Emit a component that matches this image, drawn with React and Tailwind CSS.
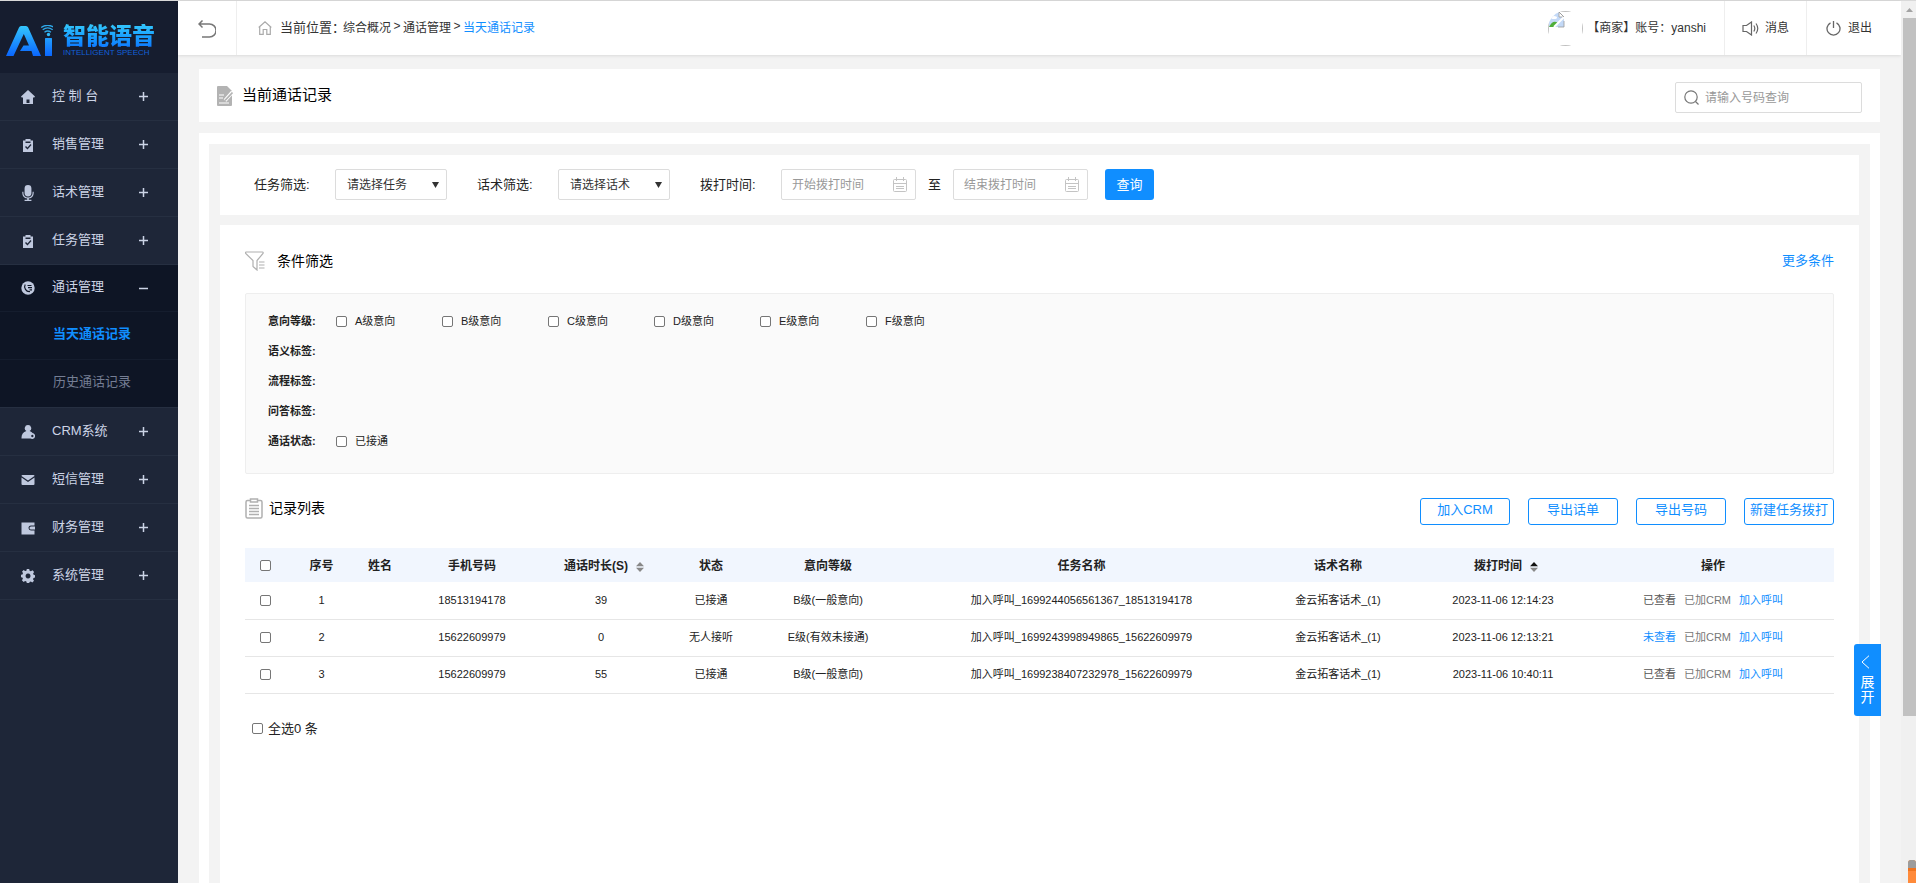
import { useState } from "react";

const FONT = "font-['Liberation_Sans','Noto_Sans_CJK_SC',sans-serif]";

function Logo() {
  return (
    <div className="flex items-center gap-[10px]">
      <svg viewBox="0 0 47 31" className="h-[31px] w-[47px] shrink-0" aria-hidden="true">
        <defs>
          <linearGradient id="logo" x1="0" y1="0" x2="0" y2="31" gradientUnits="userSpaceOnUse">
            <stop offset="0" stopColor="#35c8fb" />
            <stop offset="1" stopColor="#0a66ff" />
          </linearGradient>
        </defs>
        <path
          fill="url(#logo)"
          d="M15 1h5q1.500 0 2.200 1.500L35 31h-8l-1.500-5H14l3.500-5.500h5.500L17.800 9 7.500 31H0L13 2.500Q13.600 1 15 1z"
        />
        <rect x="39" y="13" width="7" height="18" rx=".5" fill="url(#logo)" />
        <circle cx="42.500" cy="9.500" r="1.700" fill="#2fbaf9" />
        <path
          d="M39.300 7.300q3.200-2.600 6.400 0M37.500 4.800q5-4 10 0M36 2.500q6.500-4.500 13 0"
          transform="translate(-.8 0)"
          fill="none"
          stroke="#2fa8e8"
          strokeWidth="1.300"
        />
      </svg>
      <div className="flex flex-col">
        <span className="bg-linear-to-b from-[#35c8fb] to-[#1277ff] bg-clip-text text-[23px] leading-[24px] font-black whitespace-nowrap text-transparent">
          智能语音
        </span>
        <span className="mt-px text-[8px] leading-[8px] whitespace-nowrap text-[#1260d8]">INTELLIGENT SPEECH</span>
      </div>
    </div>
  );
}

function MenuIcon({ name }) {
  const glyphs = {
    home: (
      <path fillRule="evenodd" d="M7 0l7 6.500-.7 1H12V14H2V7.500H.7L0 6.500zM5.500 9.500v3.500h3V9.500z" />
    ),
    clip: (
      <path fillRule="evenodd" d="M2 2.500h2.500V1h5v1.500H12V14H2zM4.500 3.500V5h5V3.500zM4 9l2.500 2.500L10.500 7l-1-.9L6.500 9.600 5 8z" />
    ),
    mic: (
      <path d="M4 3a3 3 0 0 1 6 0v4a3 3 0 0 1-6 0zM2 6h1v1a4 4 0 0 0 8 0V6h1v1a5 5 0 0 1-4.300 4.900V13H10v1H4v-1h2.300v-1.100A5 5 0 0 1 2 7z" />
    ),
    call: (
      <>
        <circle cx="7" cy="7" r="6.700" />
        <path d="M4.200 3.500C2.500 6.500 5 11 9 10.500M6.500 4.500h4M7 6.700h4M8.500 8.800H11" fill="none" stroke="#0e1525" strokeWidth="1.200" />
      </>
    ),
    user: (
      <path fillRule="evenodd" d="M7 0a3.200 3.200 0 0 1 1.600 6C10 6.500 11 7.200 11.500 8A3 3 0 1 1 9.500 13.500H.5C.3 9.500 2 7 5.400 6A3.200 3.200 0 0 1 7 0zM11.300 9.800a1.200 1.200 0 1 0 .1 0z" />
    ),
    mail: <path d="M.5 3a1 1 0 0 1 1-1h11a1 1 0 0 1 1 1L7 7.500zM.5 4.500L7 9l6.500-4.500V11a1 1 0 0 1-1 1h-11a1 1 0 0 1-1-1z" />,
    wallet: (
      <path fillRule="evenodd" d="M.5 1.500h13V4.500H10a2.500 2.500 0 0 0 0 5h3.500v4H.5zM10 5.500h4v3h-4a1.500 1.500 0 0 1 0-3z" />
    ),
    gear: (
      <path fillRule="evenodd" d="M5.800 0h2.400l.4 1.800 1.300.5 1.600-1 1.600 1.700-1 1.500.5 1.300 1.400.4v2.300l-1.500.4-.5 1.300 1 1.500-1.700 1.700-1.500-1-1.200.5L8.200 14H5.800l-.4-1.600-1.300-.5-1.500 1-1.700-1.700 1-1.500-.5-1.300L0 8.200V5.800l1.500-.4L2 4.100 1 2.700l1.600-1.600 1.500 1 1.300-.4zM7 4.500a2.500 2.500 0 1 0 .1 0z" />
    ),
  };
  return (
    <svg
      viewBox="0 0 14 14"
      className={(name === "mic" ? "-mx-px size-4" : "size-[14px]") + " text-[#bfc8de]"}
      fill="currentColor"
      aria-hidden="true"
    >
      {glyphs[name]}
    </svg>
  );
}

const MENU = [
  { icon: "home", label: "控 制 台" },
  { icon: "clip", label: "销售管理" },
  { icon: "mic", label: "话术管理" },
  { icon: "clip", label: "任务管理" },
  { icon: "call", label: "通话管理", open: true },
  { icon: "user", label: "CRM系统" },
  { icon: "mail", label: "短信管理" },
  { icon: "wallet", label: "财务管理" },
  { icon: "gear", label: "系统管理" },
];

function Sidebar() {
  return (
    <aside className="w-[178px] shrink-0 bg-[#1e2638] text-[13px] text-[#ccd4e6]">
      <div className="flex h-[72px] items-center bg-[#161d2f] pt-1.5 pl-1.5">
        <Logo />
      </div>
      <nav>
        {MENU.map((m) => (
          <div key={m.label} className={m.open ? "bg-[#0e1525]" : ""}>
            <button
              type="button"
              aria-expanded={!!m.open}
              className={
                "flex w-full items-center border-b pl-[21px] pr-[30px] " +
                (m.open ? "h-[47px] border-[#151d2e]" : "h-12 border-[#262f41]")
              }
            >
              <MenuIcon name={m.icon} />
              <span className="ml-[17px] grow pb-0.5 text-left">{m.label}</span>
              <svg viewBox="0 0 9 9" className="size-[9px]" stroke="currentColor" strokeWidth="1.500" aria-hidden="true">
                <path d={m.open ? "M0 4.500h9" : "M0 4.500h9M4.500 0v9"} />
              </svg>
            </button>
            {m.open && (
              <>
                <a href="#today" className="flex h-12 items-center border-b border-[#151d2e] pb-1 pl-[53px] font-bold text-[#108eff]">
                  当天通话记录
                </a>
                <a href="#history" className="flex h-12 items-center border-b border-[#262f41] pb-1 pl-[53px] text-[#757e94]">
                  历史通话记录
                </a>
              </>
            )}
          </div>
        ))}
      </nav>
    </aside>
  );
}

function Header() {
  return (
    <header className="flex h-[54px] items-stretch bg-white text-xs text-[#333] shadow-[0_1px_3px_rgba(0,0,0,0.1)]">
      <button type="button" aria-label="返回" className="flex w-[59px] items-center justify-center border-r border-[#eee] pt-0.5">
        <svg viewBox="0 0 18 18" className="size-[18px]" fill="none" stroke="#777" strokeWidth="1.500">
          <path d="M4.500 0.500L1 4l3.500 3.500M1 4h10.500a6.500 6.500 0 0 1 0 13H4" />
        </svg>
      </button>
      <div className="flex grow items-center pl-[21px]">
        <svg viewBox="0 0 14 14" className="mr-2 size-[14px]" fill="none" stroke="#aaa" strokeWidth="1.200" aria-hidden="true">
          <path d="M.7 6.500L7 .8l6.300 5.700M1.700 5.700v7.700h3.500V8.500h3.600v4.900h3.500V5.700" />
        </svg>
        <span className="w-[63px] text-[13px] whitespace-nowrap">当前位置：</span>
        <a href="#overview">综合概况</a>
        <span className="w-3 pb-1 text-center">&gt;</span>
        <a href="#calls">通话管理</a>
        <span className="w-3 pb-1 text-center">&gt;</span>
        <a href="#today" className="text-[#108eff]">当天通话记录</a>
      </div>
      <div className="flex items-center pr-[18px]">
        <div className="mr-1 size-[35px] overflow-hidden rounded-full">
          <div className="size-full border border-[#c0c0c0]">
            <svg viewBox="0 0 16 16" className="size-4" aria-hidden="true">
              <path d="M0 0h10l5 5v10H0z" fill="#c3d9f7" />
              <path d="M10 0v5h5z" fill="#fff" stroke="#999" strokeWidth=".8" />
              <ellipse cx="5" cy="5.500" rx="3" ry="1.600" fill="#fff" />
              <path d="M0 15q4-8 9-4l-3 4z" fill="#4fae3a" />
              <path d="M15 5L5 15" stroke="#fff" strokeWidth="2" />
              <path d="M10 0l5 5M15 9v6H9" fill="none" stroke="#999" strokeWidth=".8" />
            </svg>
          </div>
        </div>
        <span>【商家】账号：yanshi</span>
      </div>
      <button type="button" className="flex w-[82px] items-center justify-center gap-1.5 border-l border-[#eee]">
        <svg viewBox="0 0 17 15" className="h-[15px] w-[17px]" fill="none" stroke="#666" strokeWidth="1.200" aria-hidden="true">
          <path d="M1 4.500h3.500L9.500 1v13L4.500 10.500H1zM11.800 4.500q2 3 0 6M14 2.500q3.500 5 0 10" />
        </svg>
        消息
      </button>
      <button type="button" className="flex w-[95px] items-center gap-[7px] border-l border-[#eee] pl-[19px]">
        <svg viewBox="0 0 15 15" className="size-[15px]" fill="none" stroke="#666" strokeWidth="1.300" aria-hidden="true">
          <path d="M4.500 1.800a6.500 6.500 0 1 0 6 0M7.500 0v7" />
        </svg>
        退出
      </button>
    </header>
  );
}

function CalendarIcon() {
  return (
    <svg viewBox="0 0 14 15" className="h-[15px] w-[14px] shrink-0" fill="none" stroke="#c4c4c4" aria-hidden="true">
      <rect x=".5" y="2.500" width="13" height="12" rx="1" />
      <path d="M1 6.500h12M3.500 0v4M10.500 0v4M3 9.500h8M3 11.500h8" />
    </svg>
  );
}

function DateField({ id, label }) {
  return (
    <div className="flex h-[31px] w-[135px] items-center rounded-[2px] border border-[#dcdcdc] pl-2.5 pr-2">
      <input id={id} aria-label={label} placeholder={label} className="w-0 grow text-xs outline-none placeholder:text-[#999]" />
      <CalendarIcon />
    </div>
  );
}

function SelectField({ id, text }) {
  return (
    <div className="relative w-[112px]">
      <select id={id} className="h-[31px] w-full appearance-none rounded-[2px] border border-[#dcdcdc] bg-white pl-[11px] text-xs text-[#333]">
        <option>{text}</option>
      </select>
      <svg viewBox="0 0 7 6" className="pointer-events-none absolute right-2 top-[13px] h-1.5 w-[7px]" fill="#333" aria-hidden="true">
        <path d="M0 0h7L3.500 6z" />
      </svg>
    </div>
  );
}

function Check({ className = "", ...rest }) {
  return (
    <input
      type="checkbox"
      className={"size-[11px] shrink-0 appearance-none rounded-[2px] border border-[#767676] bg-white checked:bg-[#108eff] " + className}
      {...rest}
    />
  );
}

function FilterRow({ title, options = [] }) {
  return (
    <div className="flex h-[30px] items-center">
      <span className="w-[68px] font-bold">{title}:</span>
      {options.map((o) => (
        <label key={o} className="flex w-[106px] items-center gap-2">
          <Check />
          {o}
        </label>
      ))}
    </div>
  );
}

function Sort({ up = "#888", down = "#888" }) {
  return (
    <svg viewBox="0 0 8 10" className="ml-2 inline-block h-2.5 w-2" aria-hidden="true">
      <path d="M0 4.200L4 0l4 4.200z" fill={up} />
      <path d="M0 5.800L4 10l4-4.200z" fill={down} />
    </svg>
  );
}

const ROWS = [
  ["1", "", "18513194178", "39", "已接通", "B级(一般意向)", "加入呼叫_1699244056561367_18513194178", "金云拓客话术_(1)", "2023-11-06 12:14:23", "已查看"],
  ["2", "", "15622609979", "0", "无人接听", "E级(有效未接通)", "加入呼叫_1699243998949865_15622609979", "金云拓客话术_(1)", "2023-11-06 12:13:21", "未查看"],
  ["3", "", "15622609979", "55", "已接通", "B级(一般意向)", "加入呼叫_1699238407232978_15622609979", "金云拓客话术_(1)", "2023-11-06 10:40:11", "已查看"],
];

function Records() {
  const [picked, setPicked] = useState([]);
  const all = picked.length === ROWS.length;
  const toggleAll = () => setPicked(all ? [] : ROWS.map((r) => r[0]));
  const toggle = (id) => setPicked(picked.includes(id) ? picked.filter((p) => p !== id) : [...picked, id]);
  return (
    <>
      <table className="mt-[23px] w-full table-fixed text-center text-[11px] text-[#222]">
        <colgroup>
          <col className="w-[41px]" />
          <col className="w-[71px]" />
          <col className="w-[46px]" />
          <col className="w-[138px]" />
          <col className="w-[120px]" />
          <col className="w-[100px]" />
          <col className="w-[134px]" />
          <col className="w-[373px]" />
          <col className="w-[140px]" />
          <col className="w-[190px]" />
          <col className="w-[236px]" />
        </colgroup>
        <thead className="bg-[#f1f6fe] text-xs">
          <tr className="h-[34px]">
            <th><Check className="mx-auto block" aria-label="全选" checked={all} onChange={toggleAll} /></th>
            <th className="pt-0.5">序号</th>
            <th className="pt-0.5">姓名</th>
            <th className="pt-0.5">手机号码</th>
            <th className="pt-0.5 pl-1.5">通话时长(S)<Sort /></th>
            <th className="pt-0.5">状态</th>
            <th className="pt-0.5">意向等级</th>
            <th className="pt-0.5">任务名称</th>
            <th className="pt-0.5">话术名称</th>
            <th className="pt-0.5 pl-1.5">拨打时间<Sort up="#111" /></th>
            <th className="pt-0.5 pr-1.5">操作</th>
          </tr>
        </thead>
        <tbody>
          {ROWS.map((r) => (
            <tr key={r[0]} className="h-[37px] border-b border-[#e6e6e6]">
              <td>
                <Check className="mx-auto block" aria-label={"选择 " + r[0]} checked={picked.includes(r[0])} onChange={() => toggle(r[0])} />
              </td>
              {r.slice(0, 9).map((c, i) => (
                <td key={i}>{c}</td>
              ))}
              <td className="pr-1.5">
                <div className="flex justify-center gap-2">
                  <a href="#view" className={r[9] === "未查看" ? "text-[#108eff]" : "text-[#555]"}>{r[9]}</a>
                  <span className="text-[#777]">已加CRM</span>
                  <a href="#call" className="text-[#108eff]">加入呼叫</a>
                </div>
              </td>
            </tr>
          ))}
        </tbody>
      </table>
      <label className="mt-[25px] flex items-center gap-[5px] pl-[7px] text-[13px] text-[#222]">
        <Check checked={all} onChange={toggleAll} />
        全选{picked.length} 条
      </label>
    </>
  );
}

function Content() {
  return (
    <section className="flex grow flex-col bg-white px-[25px] pt-[22px]">
      <div className="flex h-7 items-center">
        <svg viewBox="0 0 20 20" className="size-5" fill="none" stroke="#b0b0b0" strokeWidth="1.200" aria-hidden="true">
          <path d="M1 1h16.500q1 0 .5 1.500L12 9.500V19l-4-3.500v-6L.7 2.500Q.3 1 1 1z" />
          <path d="M14 11h5.500M14 14h5.500M14 17h5.500" />
        </svg>
        <h2 className="ml-3 grow text-sm text-black">条件筛选</h2>
        <a href="#more" className="text-[13px] text-[#108eff]">更多条件</a>
      </div>
      <div className="mt-[18px] h-[181px] rounded-[2px] border border-[#eee] bg-[#fafafa] px-[22px] pt-3 text-[11px] text-[#222]">
        <FilterRow title="意向等级" options={["A级意向", "B级意向", "C级意向", "D级意向", "E级意向", "F级意向"]} />
        <FilterRow title="语义标签" />
        <FilterRow title="流程标签" />
        <FilterRow title="问答标签" />
        <FilterRow title="通话状态" options={["已接通"]} />
      </div>
      <div className="mt-6 flex items-start">
        <svg viewBox="0 0 18 21" className="h-[21px] w-[18px]" fill="none" stroke="#b0b0b0" strokeWidth="1.500" aria-hidden="true">
          <path d="M5 2.500H2.500A1.500 1.500 0 0 0 1 4v14.500A1.500 1.500 0 0 0 2.500 20h13a1.500 1.500 0 0 0 1.500-1.500V4a1.500 1.500 0 0 0-1.500-1.500H13" />
          <path d="M5.500 1h7v3h-7zM4 7.500h10M4 10.500h10M4 13.500h10M4 16.500h10" />
        </svg>
        <h2 className="ml-1.5 grow text-sm text-black">记录列表</h2>
        <div className="flex gap-[18px] text-[13px] text-[#108eff]">
          {["加入CRM", "导出话单", "导出号码", "新建任务拨打"].map((b) => (
            <button key={b} type="button" className="h-[27px] w-[90px] rounded-[3px] border border-[#108eff] pb-1 whitespace-nowrap">
              {b}
            </button>
          ))}
        </div>
      </div>
      <Records />
    </section>
  );
}

export default function App() {
  return (
    <div className={"relative flex min-h-screen flex-col overflow-hidden bg-[#f3f3f3] " + FONT}>
      <div className="h-px bg-[#d9d9d9]" />
      <div className="flex grow">
        <Sidebar />
        <div className="flex min-w-0 grow flex-col">
          <Header />
          <main className="relative mx-[21px] mt-3.5 flex grow flex-col">
            <section className="flex h-[53px] items-center bg-white px-[18px] pt-1">
              <svg viewBox="0 0 17 20" className="-mt-1 h-5 w-[17px]" aria-hidden="true">
                <path d="M1 0h9l5 5v14a1 1 0 0 1-1 1H1a1 1 0 0 1-1-1V1a1 1 0 0 1 1-1z" fill="#b3b3b3" />
                <path d="M2 9h5M2 12h4M2 17h10" stroke="#fff" />
                <path d="M8 14.500L15.500 6" stroke="#fff" strokeWidth="3.500" />
                <path d="M8 14.500L15.500 6.500" stroke="#b3b3b3" strokeWidth="1.800" />
              </svg>
              <h1 className="ml-2 grow pb-1 text-[15px] text-black">当前通话记录</h1>
              <label className="flex h-[31px] w-[187px] items-center rounded-[2px] border border-[#dcdcdc] pl-2">
                <svg viewBox="0 0 15 15" className="mr-1.5 size-[15px] shrink-0" fill="none" stroke="#777" strokeWidth="1.200" aria-hidden="true">
                  <circle cx="7" cy="7" r="6.200" />
                  <path d="M11.500 11.500l3 3" />
                </svg>
                <input aria-label="号码查询" placeholder="请输入号码查询" className="w-0 grow text-xs outline-none placeholder:text-[#999]" />
              </label>
            </section>
            <div className="mt-[11px] flex grow flex-col bg-white px-2.5 pt-[11px]">
              <div className="flex grow flex-col bg-[#f3f3f3] px-[11px] pt-[11px]">
                <form className="flex h-[60px] items-center bg-white pb-px pl-[34px] text-[13px] text-[#222]" onSubmit={(e) => e.preventDefault()}>
                  <label htmlFor="task" className="w-[81px]">任务筛选:</label>
                  <SelectField id="task" text="请选择任务" />
                  <label htmlFor="script" className="ml-[30px] w-[81px]">话术筛选:</label>
                  <SelectField id="script" text="请选择话术" />
                  <label htmlFor="from" className="ml-[30px] w-[81px]">拨打时间:</label>
                  <DateField id="from" label="开始拨打时间" />
                  <span className="w-[37px] text-center">至</span>
                  <DateField id="to" label="结束拨打时间" />
                  <button type="submit" className="ml-[17px] h-[31px] w-[49px] rounded-[3px] bg-[#108eff] text-white">查询</button>
                </form>
                <div className="mt-2.5 flex grow flex-col">
                  <Content />
                </div>
              </div>
            </div>
            <button
              type="button"
              className="absolute -right-px top-[575px] flex h-[72px] w-[27px] flex-col items-center rounded-l-[3px] bg-[#108eff] pt-[11px] text-[14px] leading-[15px] text-white"
            >
              <svg viewBox="0 0 9 14" className="mr-1 mb-1.5 h-[14px] w-[9px]" fill="none" stroke="#fff" aria-hidden="true">
                <path d="M8 .7L1 7l7 6.300" />
              </svg>
              <span>展</span>
              <span>开</span>
            </button>
          </main>
        </div>
        <div className="flex w-[15px] shrink-0 flex-col items-end bg-[#f0f0f0]" aria-hidden="true">
          <svg viewBox="0 0 13 17" className="h-[17px] w-[13px]" fill="#a3a3a3">
            <path d="M3 11l3.500-4 3.500 4z" />
          </svg>
          <div className="h-[698px] w-[13px] bg-[#c1c1c1]" />
        </div>
      </div>
      <div className="absolute right-0 bottom-0 h-[23px] w-2 overflow-hidden rounded-t-[3px] bg-[#ff8a3a]" aria-hidden="true">
        <div className="h-2 bg-[#9c9c9c]" />
        <div className="h-[3px] bg-[#ef7420]" />
      </div>
    </div>
  );
}
